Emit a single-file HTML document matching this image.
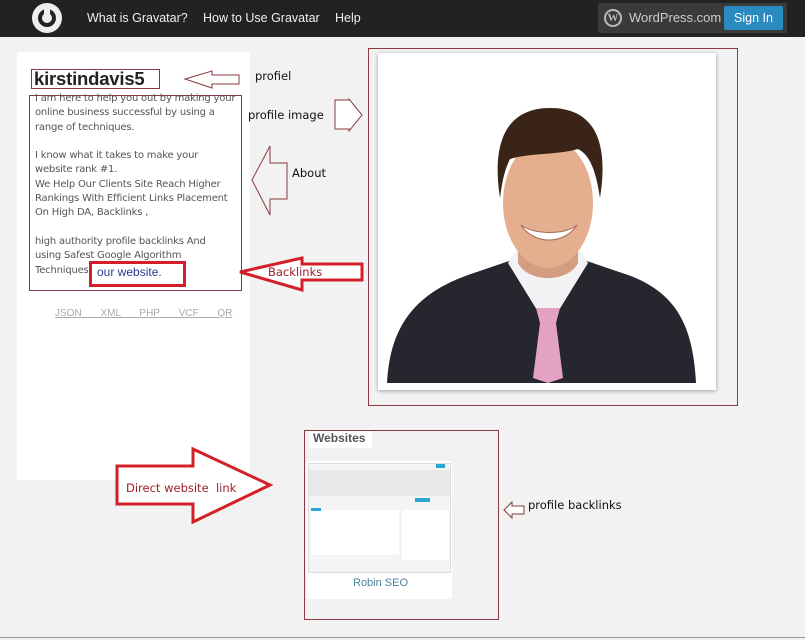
<!DOCTYPE html>
<html><head><meta charset="utf-8"><style>
*{margin:0;padding:0;box-sizing:border-box}
body{width:805px;height:640px;background:#f3f2f3;font-family:"Liberation Sans",sans-serif;position:relative;overflow:hidden}
.a{position:absolute}
.hdr{left:0;top:0;width:805px;height:37px;background:#222}
.nav{color:#eee;font-size:12.5px;top:11px}
.t{font-family:"DejaVu Sans",sans-serif;font-size:10px;color:#555;line-height:14.3px;white-space:nowrap;letter-spacing:-0.2px}
.lbl{font-family:"DejaVu Sans",sans-serif;font-size:11.5px;color:#111}
</style></head><body>
<div class="a hdr"></div>
<div class="a" style="left:32px;top:3px;width:30px;height:30px;border-radius:50%;background:#eee"></div>
<div class="a" style="left:38px;top:9px;width:18px;height:18px;border-radius:50%;background:#222"></div>
<div class="a" style="left:42px;top:13px;width:10px;height:10px;border-radius:50%;background:#eee"></div>
<div class="a" style="left:44px;top:5px;width:6px;height:12px;background:#eee"></div>
<div class="a" style="left:44px;top:13px;width:6px;height:4px;background:#eee"></div>
<div class="a nav" style="left:87px">What is Gravatar?</div>
<div class="a nav" style="left:203px">How to Use Gravatar</div>
<div class="a nav" style="left:335px">Help</div>
<div class="a" style="left:598px;top:3px;width:189px;height:30px;background:#3a3a3a;border-radius:2px"></div>
<div class="a" style="left:604px;top:9px;width:18px;height:18px;border-radius:50%;border:2px solid #bbb;color:#bbb;font:bold 11px 'Liberation Serif',serif;text-align:center;line-height:14px">W</div>
<div class="a" style="left:629px;top:10px;color:#ccc;font-size:13px">WordPress.com</div>
<div class="a" style="left:724px;top:6px;width:59px;height:24px;background:#2a8bc1;color:#fff;font-size:12.5px;text-align:center;line-height:24px;border-radius:2px">Sign In</div>

<div class="a" style="left:17px;top:52px;width:233px;height:428px;background:#fff"></div>
<div class="a" style="left:31px;top:69px;width:129px;height:20px;border:1px solid #8a3a40"></div>
<div class="a" style="left:34px;top:68px;font-size:18.5px;font-weight:bold;color:#222;letter-spacing:-0.2px">kirstindavis5</div>
<div class="a" style="left:29px;top:95px;width:213px;height:196px;border:1px solid #8a3a40"></div>
<div class="a t" style="left:35px;top:92px">I am here to help you out by making your<br>online business successful by using a<br>range of techniques.<br><br>I know what it takes to make your<br>website rank #1.<br>We Help Our Clients Site Reach Higher<br>Rankings With Efficient Links Placement<br>On High DA, Backlinks ,<br><br>high authority profile backlinks And<br>using Safest Google Algorithm<br>Techniques</div>
<div class="a" style="left:89px;top:261px;width:97px;height:26px;border:3px solid #d32028;background:#fff"></div>
<div class="a" style="left:97px;top:265px;font-size:12px;color:#2c3a8c">our website.</div>
<div class="a" style="left:55px;top:308px;font-size:10px;color:#aaa;text-decoration:underline;word-spacing:16px">JSON XML PHP VCF QR</div>

<svg class="a" style="left:0;top:0" width="805" height="640">
<polygon points="185,79 212,71 212,75 239,75 239,84 212,84 212,88" fill="#fff" stroke="#8a3a40"/>
<polygon points="335,100 349,100 349,99 362,115 349,131 349,129 335,129" fill="#fff" stroke="#8a3a40"/>
<polygon points="252,180 270,146 270,163 287,163 287,199 270,199 270,215" fill="none" stroke="#8a3a40"/>
<polygon points="240,272 302,258 302,264 362,264 362,280 302,280 302,290" fill="#fff" stroke="#d32028" stroke-width="3"/>
<polygon points="117,466 193,466 193,449 270,485 193,522 193,504 117,504" fill="#fff" stroke="#d32028" stroke-width="3"/>
<polygon points="504,510 512,502 512,506 524,506 524,514 512,514 512,518" fill="#fff" stroke="#8a3a40"/>
<rect x="368.5" y="48.5" width="369" height="357" fill="none" stroke="#8a3a40"/>
<rect x="304.5" y="430.5" width="194" height="189" fill="none" stroke="#8a3a40"/>
<line x1="0" y1="637.5" x2="805" y2="637.5" stroke="#999"/>
</svg>
<div class="a lbl" style="left:255px;top:69px">profiel</div>
<div class="a lbl" style="left:248px;top:108px">profile image</div>
<div class="a lbl" style="left:292px;top:166px">About</div>
<div class="a lbl" style="left:268px;top:265px;color:#a0202a">Backlinks</div>
<div class="a lbl" style="left:126px;top:481px;color:#a0202a">Direct website&nbsp; link</div>
<div class="a lbl" style="left:528px;top:498px">profile backlinks</div>

<div class="a" style="left:378px;top:53px;width:338px;height:337px;background:#fff;box-shadow:0 1px 4px rgba(0,0,0,.35)"></div>
<svg class="a" style="left:378px;top:53px" width="338" height="337">
<path d="M9,330 C12,270 40,240 90,222 L140,205 L200,205 L250,222 C300,240 315,275 318,330 Z" fill="#25262e"/>
<path d="M130,210 L170,275 L210,210 L200,195 L140,195 Z" fill="#f2f2f5"/>
<path d="M158,255 L182,255 L178,270 L185,325 L170,330 L155,325 L162,270 Z" fill="#e3a2c4"/>
<path d="M140,170 L140,210 C150,230 190,230 200,210 L200,170 Z" fill="#d49c80"/>
<ellipse cx="170" cy="150" rx="45" ry="65" fill="#e4ae8f"/>
<path d="M122,145 C112,80 135,55 172,55 C212,55 232,82 222,145 C218,118 212,102 200,96 C180,102 150,100 132,106 C126,118 124,130 122,145 Z" fill="#3a2418"/>
<path d="M143,172 C156,192 186,192 199,172 C188,182 156,182 143,172 Z" fill="#fff" stroke="#a86a58"/>
</svg>

<div class="a" style="left:309px;top:431px;width:63px;height:17px;background:#fff"></div>
<div class="a" style="left:313px;top:431px;font-size:12px;font-weight:bold;color:#555">Websites</div>
<div class="a" style="left:306px;top:461px;width:146px;height:138px;background:#fff"></div>
<div class="a" style="left:308px;top:463px;width:143px;height:110px;background:#f4f4f4;border:1px solid #ddd"></div>
<div class="a" style="left:309px;top:470px;width:141px;height:26px;background:#e8e8e8"></div>
<div class="a" style="left:436px;top:464px;width:9px;height:4px;background:#2aa6d5"></div>
<div class="a" style="left:311px;top:510px;width:88px;height:45px;background:#fff"></div>
<div class="a" style="left:402px;top:510px;width:47px;height:50px;background:#fff"></div>
<div class="a" style="left:311px;top:508px;width:10px;height:3px;background:#2aa6d5"></div>
<div class="a" style="left:415px;top:498px;width:15px;height:4px;background:#2aa6d5"></div>
<div class="a" style="left:353px;top:577px;font-size:11px;color:#4a7f9a">Robin SEO</div>
</body></html>
